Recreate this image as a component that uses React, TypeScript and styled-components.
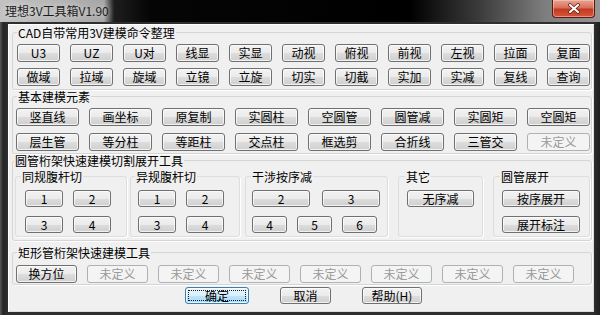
import React from "react";
import styled, { createGlobalStyle } from "styled-components";

// 전역 스타일
const GlobalStyle = createGlobalStyle`
  html, body {
    margin: 0;
    padding: 0;
    background: #2b2b2b;
  }

  body {
    width: 600px;
    height: 315px;
    overflow: hidden;
    font-family: "Noto Sans CJK SC", "Liberation Sans", sans-serif;
  }
`;

const Window = styled.div`
  width: 600px;
  height: 315px;
  box-sizing: border-box;
  padding: 0 6px 3px 8px;

  background: linear-gradient(to right, #5a5a5a 0px, #262626 3px, #2e2e2e 8px, #2e2e2e 594px, #1e1e1e 600px);

  display: flex;
  flex-direction: column;
`;

const TitleBar = styled.div`
  height: 22px;
  margin: 0 -6px 2px -8px;
  flex: none;

  background: linear-gradient(
    to right,
    #c2c2c2 0px,
    #b4b4b4 60px,
    #a6a6a6 104px,
    #1e1e1e 114px,
    #050505 150px,
    #000000 410px,
    #3c3c3c 480px,
    #7e7e7e 545px,
    #969696 600px
  );

  display: flex;
  justify-content: space-between;
  align-items: flex-start;
`;

const Title = styled.div`
  padding: 3px 0 0 5px;

  font-size: 12px;
  line-height: 15px;
  color: #1c1c1c;
  text-shadow: 0 0 6px rgba(255, 255, 255, 0.8);
`;

const CloseButton = styled.div`
  width: 43px;
  height: 18px;
  margin-right: 5px;
  box-sizing: border-box;

  border: 1px solid #5c1a10;
  border-top: none;
  border-radius: 0 0 4px 4px;

  background: linear-gradient(#e9a595 0%, #d86d55 48%, #c2391f 52%, #d6573a 100%);
  box-shadow: inset 0 0 0 1px rgba(255, 210, 200, 0.5);

  display: flex;
  align-items: center;
  justify-content: center;
`;

const Client = styled.div`
  flex: 1;
  padding-top: 2px;

  background: #f0f0f0;
  box-shadow: inset 1px 1px 0 #ffffff, inset -1px -1px 0 #dcdcdc;

  display: flex;
  flex-direction: column;
`;

const Group = styled.fieldset<{ $pt: number; $pb: number; $pl: number; $mt?: number }>`
  margin: ${({ $mt }) => $mt ?? 0}px 2px 0 4px;
  padding: ${({ $pt, $pb, $pl }) => `${$pt}px 0 ${$pb}px ${$pl}px`};
  min-width: 0;

  border: 1px solid #d5d5d5;
  border-radius: 3px;
  box-shadow: 1px 1px 0 #ffffff;
`;

const Legend = styled.legend<{ $ml?: number }>`
  height: 13px;
  padding: 0 1px;
  margin-left: ${({ $ml }) => $ml ?? 0}px;

  font-size: 12px;
  line-height: 13px;
  color: #000000;
`;

const Rows = styled.div<{ $gap: number }>`
  display: flex;
  flex-direction: column;
  gap: ${({ $gap }) => $gap}px;
`;

const Row = styled.div<{ $gap: number }>`
  display: flex;
  gap: ${({ $gap }) => $gap}px;
`;

const Button = styled.button<{ $w: number; $h?: number; $default?: boolean }>`
  width: ${({ $w }) => $w}px;
  height: ${({ $h }) => $h ?? 18}px;
  padding: 0;
  box-sizing: border-box;
  flex: none;

  border: 1px solid ${({ $default }) => ($default ? "#3c7fb1" : "#707070")};
  border-radius: 3px;
  background: ${({ $default }) =>
    $default
      ? "linear-gradient(#eaf6fd 0%, #d9f0fc 50%, #bee6fd 51%, #a7d9f5 100%)"
      : "linear-gradient(#f2f2f2 0%, #ebebeb 50%, #dddddd 51%, #cfcfcf 100%)"};
  box-shadow: inset 0 0 0 1px rgba(255, 255, 255, 0.7);

  outline: ${({ $default }) => ($default ? "1px dotted #1a1a1a" : "none")};
  outline-offset: -4px;

  font-family: "Noto Sans CJK SC", "Liberation Sans", sans-serif;
  font-size: 12px;
  line-height: 14px;
  color: #000000;

  &:disabled {
    border-color: #adb2b5;
    background: #f4f4f4;
    box-shadow: none;
    color: #9a9a9a;
  }
`;

const SubRow = styled.div`
  display: flex;
  align-items: stretch;
`;

const SubGroup = styled.fieldset<{ $w: number; $ml: number; $pl: number }>`
  width: ${({ $w }) => $w}px;
  box-sizing: border-box;
  margin: 0 0 0 ${({ $ml }) => $ml}px;
  padding: 7px 0 3px ${({ $pl }) => $pl}px;
  min-width: 0;

  border: 1px solid #dddddd;
  border-radius: 3px;
  box-shadow: 1px 1px 0 #ffffff;
`;

const Footer = styled.div`
  margin-top: 2px;
  padding-left: 177px;

  display: flex;
  gap: 31px;
`;

const CloseIcon = () => (
  <svg width="14" height="11" viewBox="0 0 14 11">
    <path d="M3 2 L11 9 M11 2 L3 9" stroke="#5a1a10" strokeWidth="3.6" strokeLinecap="round" />
    <path d="M3 2 L11 9 M11 2 L3 9" stroke="#ffffff" strokeWidth="2.2" strokeLinecap="round" />
  </svg>
);

const cadRow1 = ["U3", "UZ", "U对", "线显", "实显", "动视", "俯视", "前视", "左视", "拉面", "复面"];
const cadRow2 = ["做域", "拉域", "旋域", "立镜", "立旋", "切实", "切截", "实加", "实减", "复线", "查询"];
const baseRow1 = ["竖直线", "画坐标", "原复制", "实圆柱", "空圆管", "圆管减", "实圆矩", "空圆矩"];
const baseRow2 = ["层生管", "等分柱", "等距柱", "交点柱", "框选剪", "合折线", "三管交", "未定义"];
const rectRow = ["换方位", "未定义", "未定义", "未定义", "未定义", "未定义", "未定义", "未定义"];

function App() {
  return (
    <>
      <GlobalStyle />
      <Window>
        <TitleBar>
          <Title>理想3V工具箱V1.90</Title>
          <CloseButton>
            <CloseIcon />
          </CloseButton>
        </TitleBar>

        <Client>
          {/* CAD 명령 */}
          <Group $pt={5} $pb={3} $pl={4}>
            <Legend>CAD自带常用3V建模命令整理</Legend>
            <Rows $gap={6}>
              <Row $gap={10}>
                {cadRow1.map((t) => (
                  <Button key={t} $w={43}>{t}</Button>
                ))}
              </Row>
              <Row $gap={10}>
                {cadRow2.map((t) => (
                  <Button key={t} $w={43}>{t}</Button>
                ))}
              </Row>
            </Rows>
          </Group>

          {/* 기본 모델링 */}
          <Group $pt={5} $pb={2} $pl={3}>
            <Legend $ml={1}>基本建模元素</Legend>
            <Rows $gap={7}>
              <Row $gap={10}>
                {baseRow1.map((t) => (
                  <Button key={t} $w={63}>{t}</Button>
                ))}
              </Row>
              <Row $gap={10}>
                {baseRow2.map((t, i) => (
                  <Button key={t + i} $w={63} disabled={t === "未定义"}>{t}</Button>
                ))}
              </Row>
            </Rows>
          </Group>

          {/* 원형관 트러스 */}
          <Group $pt={3} $pb={3} $pl={2}>
            <Legend $ml={-1}>圆管桁架快速建模切割展开工具</Legend>
            <SubRow>
              <SubGroup $w={112} $ml={0} $pl={9}>
                <Legend $ml={-4}>同规腹杆切</Legend>
                <Rows $gap={9}>
                  <Row $gap={10}>
                    <Button $w={38} $h={17}>1</Button>
                    <Button $w={38} $h={17}>2</Button>
                  </Row>
                  <Row $gap={10}>
                    <Button $w={38} $h={17}>3</Button>
                    <Button $w={38} $h={17}>4</Button>
                  </Row>
                </Rows>
              </SubGroup>

              <SubGroup $w={110} $ml={3} $pl={7}>
                <Legend $ml={-3}>异规腹杆切</Legend>
                <Rows $gap={9}>
                  <Row $gap={10}>
                    <Button $w={38} $h={17}>1</Button>
                    <Button $w={38} $h={17}>2</Button>
                  </Row>
                  <Row $gap={10}>
                    <Button $w={38} $h={17}>3</Button>
                    <Button $w={38} $h={17}>4</Button>
                  </Row>
                </Rows>
              </SubGroup>

              <SubGroup $w={143} $ml={5} $pl={6}>
                <Legend $ml={-1}>干涉按序减</Legend>
                <Rows $gap={9}>
                  <Row $gap={12}>
                    <Button $w={58} $h={17}>2</Button>
                    <Button $w={58} $h={17}>3</Button>
                  </Row>
                  <Row $gap={10}>
                    <Button $w={35} $h={17}>4</Button>
                    <Button $w={35} $h={17}>5</Button>
                    <Button $w={35} $h={17}>6</Button>
                  </Row>
                </Rows>
              </SubGroup>

              <SubGroup $w={85} $ml={10} $pl={8}>
                <Legend $ml={-2}>其它</Legend>
                <Rows $gap={9}>
                  <Button $w={67} $h={17}>无序减</Button>
                </Rows>
              </SubGroup>

              <SubGroup $w={97} $ml={10} $pl={8}>
                <Legend $ml={-2}>圆管展开</Legend>
                <Rows $gap={9}>
                  <Button $w={78} $h={17}>按序展开</Button>
                  <Button $w={78} $h={17}>展开标注</Button>
                </Rows>
              </SubGroup>
            </SubRow>
          </Group>

          {/* 사각관 트러스 */}
          <Group $mt={5} $pt={6} $pb={1} $pl={3}>
            <Legend $ml={1}>矩形管桁架快速建模工具</Legend>
            <Row $gap={10}>
              {rectRow.map((t, i) => (
                <Button key={t + i} $w={61} disabled={t === "未定义"}>{t}</Button>
              ))}
            </Row>
          </Group>

          <Footer>
            <Button $w={64} $h={17} $default>确定</Button>
            <Button $w={51} $h={17}>取消</Button>
            <Button $w={60} $h={17}>帮助(H)</Button>
          </Footer>
        </Client>
      </Window>
    </>
  );
}

export default App;
